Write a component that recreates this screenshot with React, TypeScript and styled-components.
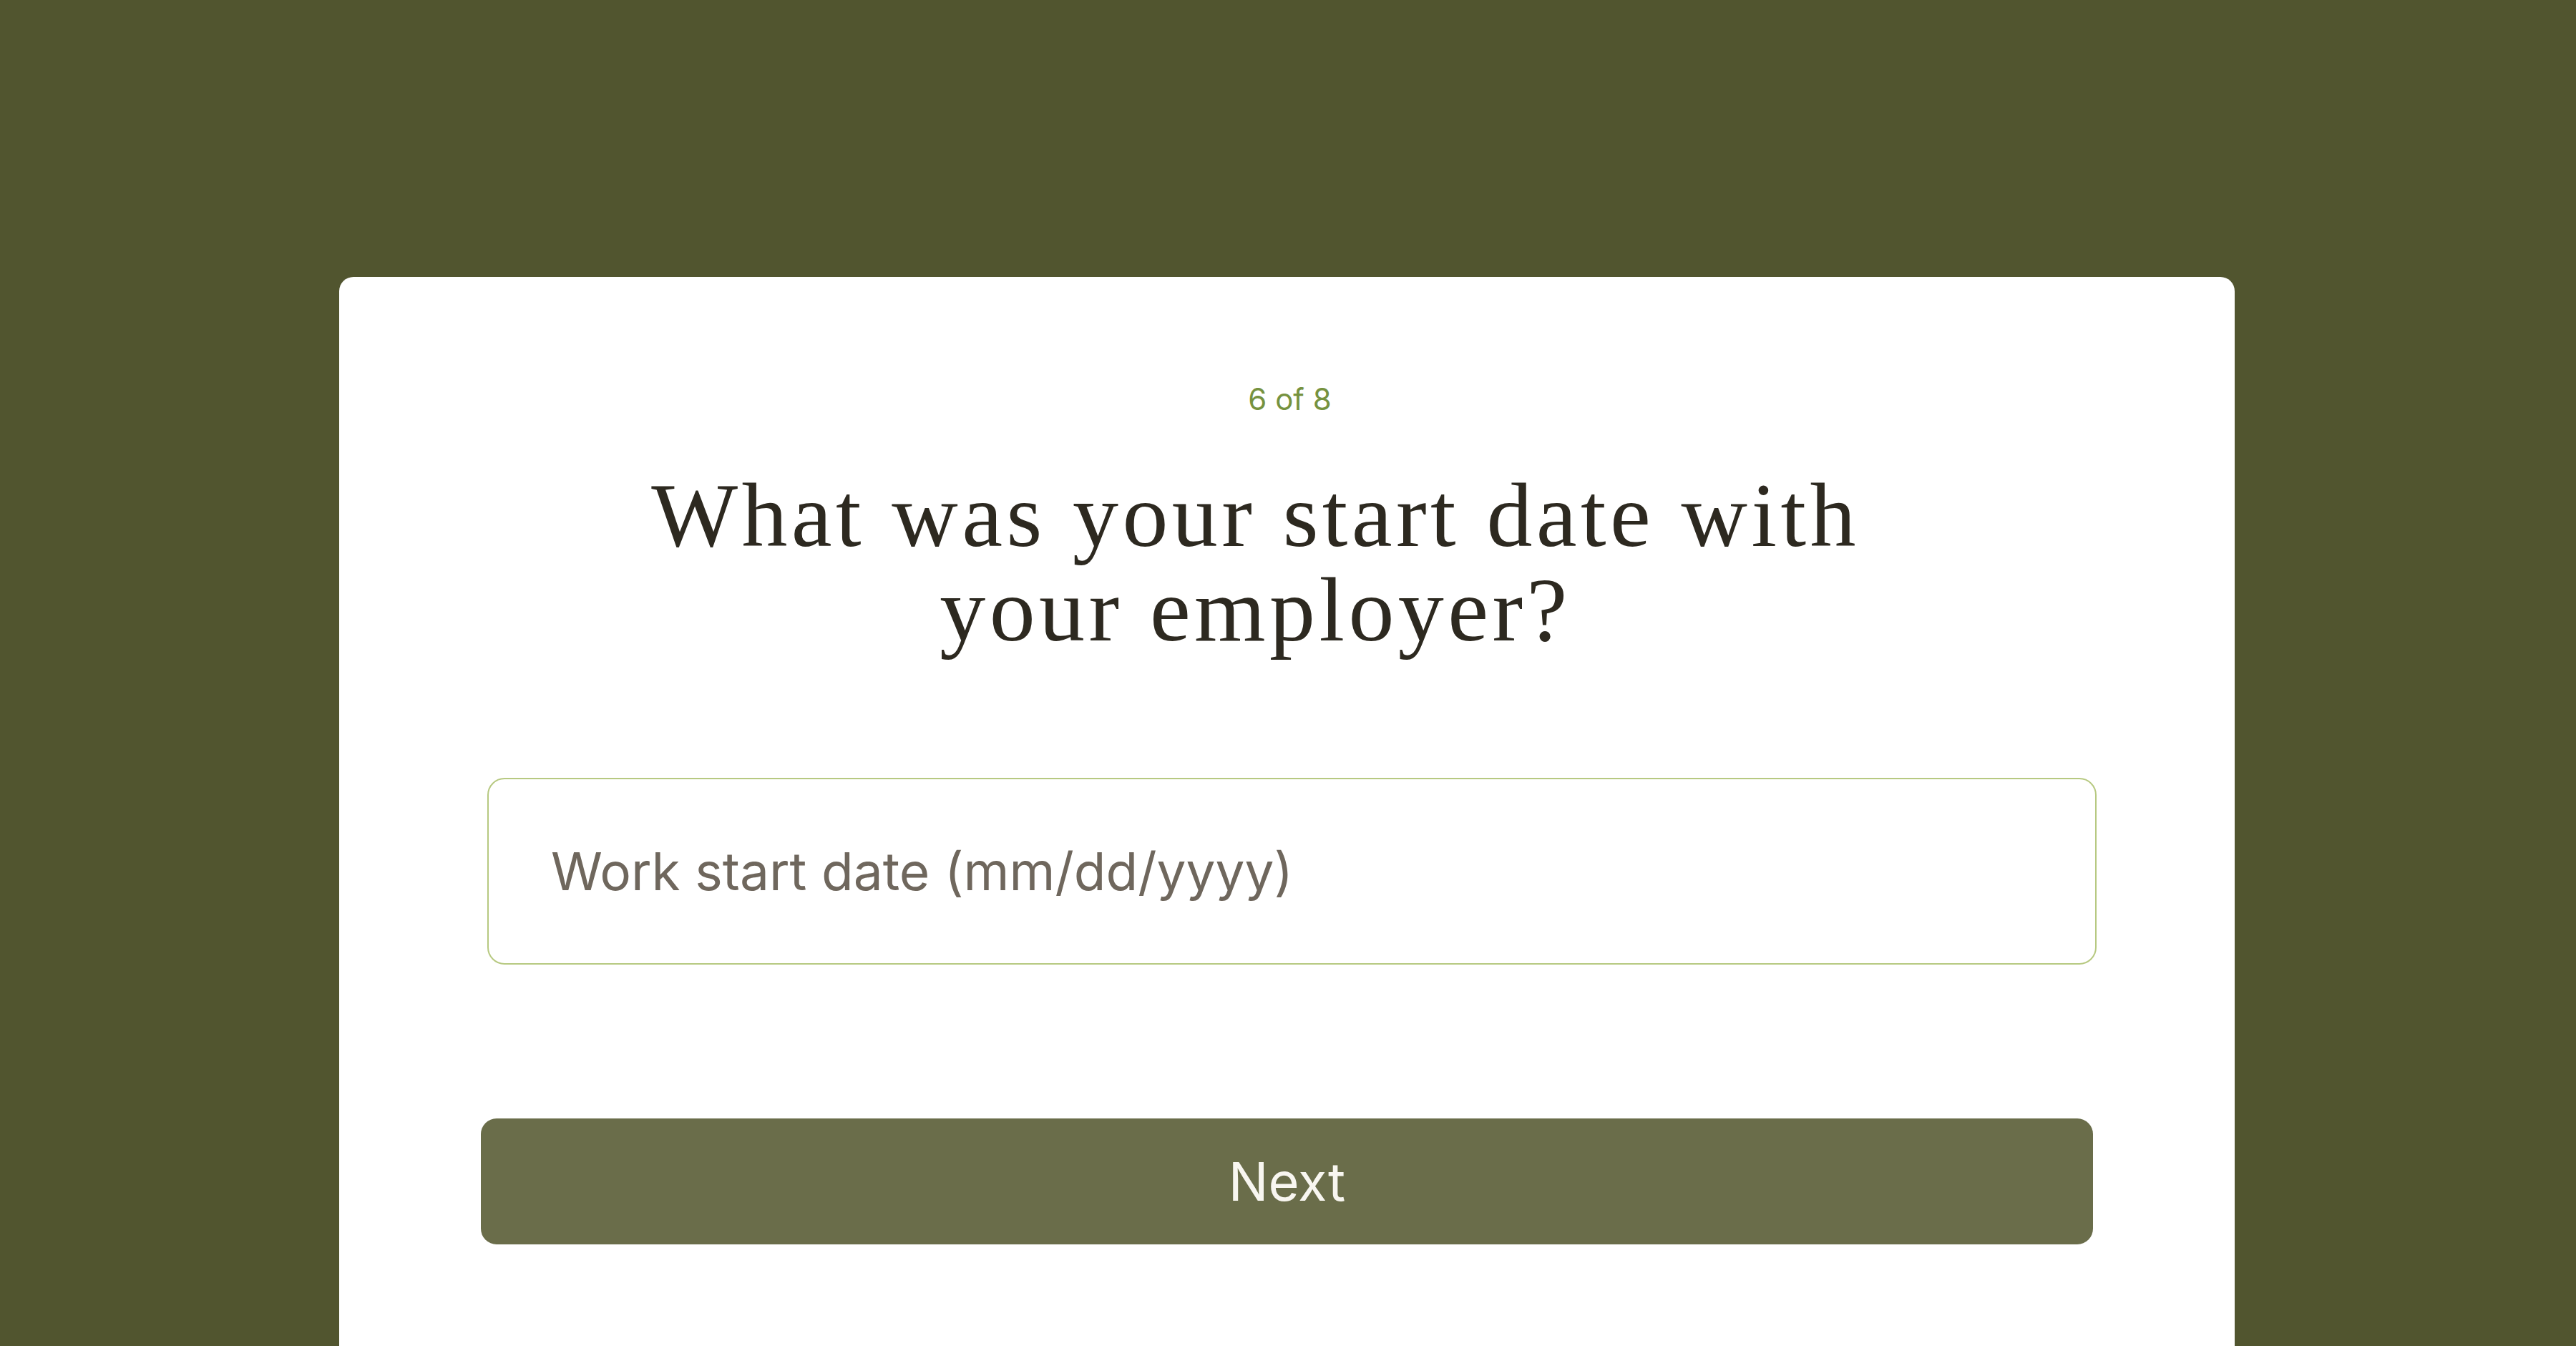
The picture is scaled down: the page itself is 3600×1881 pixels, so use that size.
import styled, { createGlobalStyle } from "styled-components";

const GlobalStyle = createGlobalStyle`
  html, body {
    margin: 0;
    padding: 0;
    background: #51552f;
  }
  #root {
    height: 1881px;
    overflow: hidden;
  }
`;

const Page = styled.main`
  display: flex;
  justify-content: center;
  padding: 387px 3px 0 0;
  min-height: 1881px;
  box-sizing: border-box;
`;

const Card = styled.section`
  width: 2649px;
  min-height: 1600px;
  box-sizing: border-box;
  padding: 150px 198px 0;
  background: #ffffff;
  border-radius: 20px 20px 0 0;
  display: flex;
  flex-direction: column;
  align-items: stretch;
`;

const Step = styled.div`
  padding-left: 8px;
  font-family: Inter, "Liberation Sans", sans-serif;
  font-size: 42px;
  line-height: 42px;
  color: #76923f;
  text-align: center;
`;

const Question = styled.h1`
  margin: 75px 88px 0 0;
  font-family: "Liberation Serif", "DejaVu Serif", serif;
  font-weight: 400;
  font-size: 128px;
  line-height: 132px;
  letter-spacing: 5.4px;
  color: #2d2920;
  text-align: center;
`;

const Field = styled.input`
  margin: 169px 0 0 9px;
  width: calc(100% - 4px);
  height: 261px;
  box-sizing: border-box;
  padding: 0 0 0 87px;
  border: 2px solid #b7c981;
  border-radius: 24px;
  background: #ffffff;
  font-family: Inter, "Liberation Sans", sans-serif;
  font-size: 73px;
  color: #2d2920;
  outline: none;

  &::placeholder {
    color: #6f675d;
    opacity: 1;
  }
`;

const NextButton = styled.button`
  margin-top: 215px;
  height: 176px;
  border: none;
  border-radius: 22px;
  background: #6a6d4a;
  color: #f8f6f0;
  font-family: Inter, "Liberation Sans", sans-serif;
  font-size: 74px;
  cursor: pointer;
`;

export default function App() {
  return (
    <>
      <GlobalStyle />
      <Page>
        <Card>
          <Step>6 of 8</Step>
          <Question>
            What was your start date with
            <br />
            your employer?
          </Question>
          <Field type="text" placeholder="Work start date (mm/dd/yyyy)" />
          <NextButton type="button">Next</NextButton>
        </Card>
      </Page>
    </>
  );
}
